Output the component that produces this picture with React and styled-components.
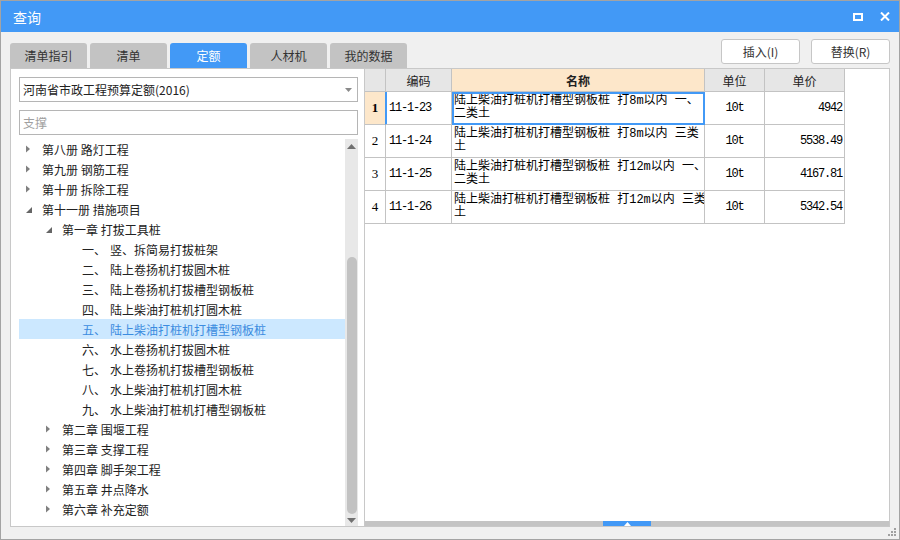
import styled, { createGlobalStyle } from "styled-components";

const GlobalStyle = createGlobalStyle`
  html, body {
    margin: 0;
    padding: 0;
    background: #ffffff;
  }
  body {
    font-family: "Noto Sans CJK SC", "Noto Sans", sans-serif;
  }
  * {
    box-sizing: border-box;
  }
`;

const BLUE = "#4299f6";
const LINE = "#c3c3c3";

const tabs = ["清单指引", "清单", "定额", "人材机", "我的数据"];

const treeItems = [
  { level: 0, arrow: "closed", text: "第八册 路灯工程" },
  { level: 0, arrow: "closed", text: "第九册 钢筋工程" },
  { level: 0, arrow: "closed", text: "第十册 拆除工程" },
  { level: 0, arrow: "open", text: "第十一册 措施项目" },
  { level: 1, arrow: "open", text: "第一章 打拔工具桩" },
  { level: 2, num: "一、", text: "竖、拆简易打拔桩架" },
  { level: 2, num: "二、", text: "陆上卷扬机打拔圆木桩" },
  { level: 2, num: "三、", text: "陆上卷扬机打拔槽型钢板桩" },
  { level: 2, num: "四、", text: "陆上柴油打桩机打圆木桩" },
  { level: 2, num: "五、", text: "陆上柴油打桩机打槽型钢板桩", selected: true },
  { level: 2, num: "六、", text: "水上卷扬机打拔圆木桩" },
  { level: 2, num: "七、", text: "水上卷扬机打拔槽型钢板桩" },
  { level: 2, num: "八、", text: "水上柴油打桩机打圆木桩" },
  { level: 2, num: "九、", text: "水上柴油打桩机打槽型钢板桩" },
  { level: 1, arrow: "closed", text: "第二章 围堰工程" },
  { level: 1, arrow: "closed", text: "第三章 支撑工程" },
  { level: 1, arrow: "closed", text: "第四章 脚手架工程" },
  { level: 1, arrow: "closed", text: "第五章 井点降水" },
  { level: 1, arrow: "closed", text: "第六章 补充定额" },
];

const rows = [
  {
    id: 1,
    code: "11-1-23",
    name: ["陆上柴油打桩机打槽型钢板桩 打8m以内 一、", "二类土"],
    unit: "10t",
    price: "4942",
  },
  {
    id: 2,
    code: "11-1-24",
    name: ["陆上柴油打桩机打槽型钢板桩 打8m以内 三类", "土"],
    unit: "10t",
    price: "5538.49",
  },
  {
    id: 3,
    code: "11-1-25",
    name: ["陆上柴油打桩机打槽型钢板桩 打12m以内 一、", "二类土"],
    unit: "10t",
    price: "4167.81",
  },
  {
    id: 4,
    code: "11-1-26",
    name: ["陆上柴油打桩机打槽型钢板桩 打12m以内 三类", "土"],
    unit: "10t",
    price: "5342.54",
  },
];

const Window = styled.div`
  width: 900px;
  height: 540px;
  border: 1px solid #a3a3a3;
  display: flex;
  flex-direction: column;
  background: #f0f0f0;
`;

const TitleBar = styled.div`
  height: 31px;
  background: ${BLUE};
  display: flex;
  align-items: center;
  justify-content: space-between;
  padding: 0 9px 0 12px;
  color: #ffffff;
`;

const Title = styled.span`
  font-size: 14px;
`;

const WindowButtons = styled.div`
  display: flex;
  align-items: center;
  gap: 17px;
`;

const Body = styled.div`
  flex: 1;
  display: flex;
  flex-direction: column;
  padding: 7px 9px 0 9px;
`;

const TopRow = styled.div`
  height: 29px;
  display: flex;
  justify-content: space-between;
  align-items: flex-start;
`;

const Tabs = styled.div`
  display: flex;
  gap: 3px;
  align-self: flex-end;
`;

const Tab = styled.div`
  width: 77px;
  height: 25px;
  line-height: 25px;
  text-align: center;
  font-size: 12px;
  border-radius: 3px 3px 0 0;
  background: ${(p) => (p.$active ? BLUE : "#c3c3c3")};
  color: ${(p) => (p.$active ? "#ffffff" : "#333333")};
`;

const Actions = styled.div`
  display: flex;
  gap: 11px;
`;

const ActionButton = styled.button`
  width: 79px;
  height: 25px;
  border: 1px solid #c6c6c6;
  border-radius: 3px;
  background: #ffffff;
  color: #333333;
  font-family: "Noto Sans CJK SC", "Noto Sans", sans-serif;
  font-size: 12px;
  padding: 0;
`;

const MainArea = styled.div`
  height: 459px;
  display: flex;
`;

const LeftPanel = styled.div`
  width: 355px;
  border: 1px solid #c8c8c8;
  background: #ffffff;
  padding: 8px 6px 0 8px;
  display: flex;
  flex-direction: column;
`;

const Select = styled.div`
  height: 25px;
  border: 1px solid #b5b5b5;
  display: flex;
  align-items: center;
  justify-content: space-between;
  padding: 0 5px 0 3px;
  font-size: 12px;
  color: #222222;
`;

const SearchInput = styled.input`
  margin-top: 8px;
  height: 25px;
  border: 1px solid #b5b5b5;
  padding: 0 3px;
  font-family: "Noto Sans CJK SC", "Noto Sans", sans-serif;
  font-size: 12px;
  color: #222222;
  outline: none;

  &::placeholder {
    color: #a0a0a0;
  }
`;

const TreeWrap = styled.div`
  margin-top: 4px;
  flex: 1;
  min-height: 0;
  display: flex;
`;

const TreeList = styled.div`
  flex: 1;
  overflow: hidden;
`;

const TreeRow = styled.div`
  height: 20px;
  display: flex;
  align-items: center;
  padding-left: ${(p) => p.$level * 20}px;
  font-size: 12px;
  white-space: nowrap;
  background: ${(p) => (p.$selected ? "#cce8ff" : "transparent")};
  color: ${(p) => (p.$selected ? "#3b8ce0" : "#222222")};
`;

const ArrowBox = styled.svg`
  width: 23px;
  height: 20px;
  flex: none;
`;

const ItemNum = styled.span`
  width: 28px;
  flex: none;
`;

const Scrollbar = styled.div`
  width: 13px;
  background: #e8e8e8;
  display: flex;
  flex-direction: column;
  align-items: center;
`;

const ScrollArrow = styled.div`
  height: ${(p) => p.$h}px;
  display: flex;
  align-items: center;
  justify-content: center;
`;

const ScrollTrack = styled.div`
  flex: 1;
  display: flex;
  flex-direction: column;
  justify-content: flex-end;
`;

const ScrollThumb = styled.div`
  width: 10px;
  height: 257px;
  border-radius: 5px;
  background: #c2c2c2;
`;

const RightPanel = styled.div`
  flex: 1;
  border: 1px solid #c8c8c8;
  border-left: none;
  background: #ffffff;
  display: flex;
  flex-direction: column;
`;

const Grid = styled.div`
  display: grid;
  grid-template-columns: 21px 66px 253px 60px 80px;
  width: max-content;
`;

const HeadCell = styled.div`
  height: 23px;
  border-right: 1px solid ${LINE};
  border-bottom: 1px solid ${LINE};
  background: ${(p) => (p.$accent ? "#fde7ca" : "#e6e6e6")};
  font-size: 12px;
  font-weight: ${(p) => (p.$accent ? 700 : 400)};
  color: #222222;
  display: flex;
  align-items: center;
  justify-content: center;
`;

const Cell = styled.div`
  height: 33px;
  border-right: 1px solid ${LINE};
  border-bottom: 1px solid ${LINE};
  display: flex;
  align-items: center;
  justify-content: ${(p) => p.$justify || "flex-start"};
  padding: 0 ${(p) => (p.$justify === "flex-end" ? "2px" : "3px")};
  color: #000000;
  font-size: 12px;
`;

const RowNum = styled(Cell)`
  justify-content: center;
  padding: 0;
  font-family: "Liberation Serif", serif;
  font-size: 13px;
  font-weight: ${(p) => (p.$current ? 700 : 400)};
  background: ${(p) => (p.$current ? "#fde7ca" : "#ffffff")};
  border-right-color: ${(p) => (p.$current ? BLUE : LINE)};
`;

const MonoText = styled.span`
  font-family: "Liberation Mono", monospace;
  font-size: 12px;
  letter-spacing: -1.2px;
`;

const CodeCell = styled(Cell)`
  box-shadow: ${(p) => (p.$current ? `inset 1px 0 0 ${BLUE}` : "none")};
`;

const NameCell = styled(Cell)`
  flex-direction: column;
  align-items: flex-start;
  justify-content: center;
  padding: 0 2px;
  overflow: hidden;
  outline: ${(p) => (p.$current ? `2px solid ${BLUE}` : "none")};
  outline-offset: -2px;
`;

const NameLine = styled.span`
  line-height: 13px;
  white-space: nowrap;
  font-family: "Liberation Mono", "Noto Sans CJK SC", monospace;
`;

const Spacer = styled.div`
  flex: 1;
`;

const Splitter = styled.div`
  height: 5px;
  background: #c4c4c4;
  display: flex;
  justify-content: center;
`;

const SplitterHandle = styled.div`
  width: 48px;
  height: 5px;
  background: ${BLUE};
  display: flex;
  align-items: center;
  justify-content: center;
`;

const BottomStrip = styled.div`
  flex: 1;
  display: flex;
  justify-content: flex-end;
  align-items: flex-end;
  padding: 0 0 2px 0;
  margin-right: -7px;
`;

function TreeArrow({ type }) {
  return (
    <ArrowBox viewBox="0 0 23 20">
      {type === "closed" && <polygon points="7,6.5 11,10 7,13.5" fill="#808080" />}
      {type === "open" && <polygon points="13,8 13,14 7,14" fill="#666666" />}
    </ArrowBox>
  );
}

function App() {
  return (
    <>
      <GlobalStyle />
      <Window>
        <TitleBar>
          <Title>查询</Title>
          <WindowButtons>
            <svg width="10" height="8" viewBox="0 0 10 8">
              <rect x="1" y="1" width="8" height="6" fill="none" stroke="#ffffff" strokeWidth="2" />
            </svg>
            <svg width="10" height="9" viewBox="0 0 10 9">
              <path d="M1 0.5 L9 8.5 M9 0.5 L1 8.5" stroke="#ffffff" strokeWidth="2" />
            </svg>
          </WindowButtons>
        </TitleBar>
        <Body>
          <TopRow>
            <Tabs>
              {tabs.map((t) => (
                <Tab key={t} $active={t === "定额"}>
                  {t}
                </Tab>
              ))}
            </Tabs>
            <Actions>
              <ActionButton>插入(I)</ActionButton>
              <ActionButton>替换(R)</ActionButton>
            </Actions>
          </TopRow>
          <MainArea>
            <LeftPanel>
              <Select>
                <span>河南省市政工程预算定额(2016)</span>
                <svg width="7" height="4" viewBox="0 0 7 4">
                  <polygon points="0,0 7,0 3.5,4" fill="#8a8a8a" />
                </svg>
              </Select>
              <SearchInput placeholder="支撑" readOnly />
              <TreeWrap>
                <TreeList>
                  {treeItems.map((item) => (
                    <TreeRow key={item.text} $level={item.level} $selected={item.selected}>
                      <TreeArrow type={item.arrow} />
                      {item.num && <ItemNum>{item.num}</ItemNum>}
                      <span>{item.text}</span>
                    </TreeRow>
                  ))}
                </TreeList>
                <Scrollbar>
                  <ScrollArrow $h={14}>
                    <svg width="9" height="5" viewBox="0 0 9 5">
                      <polygon points="0,5 9,5 4.5,0" fill="#707070" />
                    </svg>
                  </ScrollArrow>
                  <ScrollTrack>
                    <ScrollThumb />
                  </ScrollTrack>
                  <ScrollArrow $h={12}>
                    <svg width="9" height="5" viewBox="0 0 9 5">
                      <polygon points="0,0 9,0 4.5,5" fill="#707070" />
                    </svg>
                  </ScrollArrow>
                </Scrollbar>
              </TreeWrap>
            </LeftPanel>
            <RightPanel>
              <Grid>
                <HeadCell />
                <HeadCell>编码</HeadCell>
                <HeadCell $accent>名称</HeadCell>
                <HeadCell>单位</HeadCell>
                <HeadCell>单价</HeadCell>
                {rows.map((r) => {
                  const current = r.id === 1;
                  return [
                    <RowNum key={`n${r.id}`} $current={current}>
                      {r.id}
                    </RowNum>,
                    <CodeCell key={`c${r.id}`} $current={current}>
                      <MonoText>{r.code}</MonoText>
                    </CodeCell>,
                    <NameCell key={`m${r.id}`} $current={current}>
                      {r.name.map((line) => (
                        <NameLine key={line}>{line}</NameLine>
                      ))}
                    </NameCell>,
                    <Cell key={`u${r.id}`} $justify="center">
                      <MonoText>{r.unit}</MonoText>
                    </Cell>,
                    <Cell key={`p${r.id}`} $justify="flex-end">
                      <MonoText>{r.price}</MonoText>
                    </Cell>,
                  ];
                })}
              </Grid>
              <Spacer />
              <Splitter>
                <SplitterHandle>
                  <svg width="7" height="4" viewBox="0 0 7 4">
                    <polygon points="0,4 7,4 3.5,0" fill="#ffffff" />
                  </svg>
                </SplitterHandle>
              </Splitter>
            </RightPanel>
          </MainArea>
          <BottomStrip>
            <svg width="9" height="9" viewBox="0 0 9 9">
              <rect x="6" y="0" width="2" height="2" fill="#a0a0a0" />
              <rect x="3" y="3" width="2" height="2" fill="#a0a0a0" />
              <rect x="6" y="3" width="2" height="2" fill="#a0a0a0" />
              <rect x="0" y="6" width="2" height="2" fill="#a0a0a0" />
              <rect x="3" y="6" width="2" height="2" fill="#a0a0a0" />
              <rect x="6" y="6" width="2" height="2" fill="#a0a0a0" />
            </svg>
          </BottomStrip>
        </Body>
      </Window>
    </>
  );
}

export default App;
